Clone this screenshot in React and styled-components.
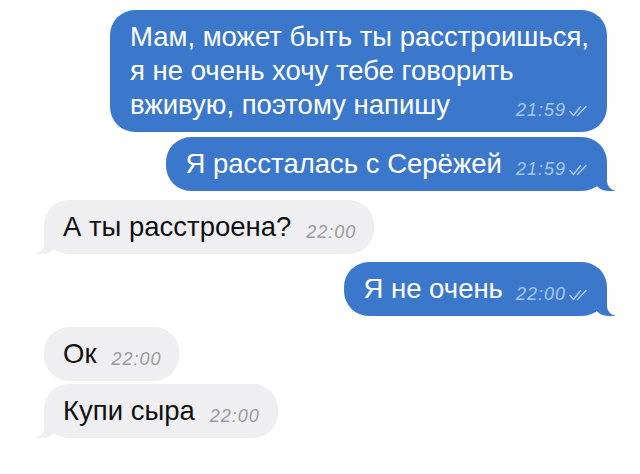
import React from "react";
import styled, { createGlobalStyle, css } from "styled-components";

const Global = createGlobalStyle`
  html, body { margin: 0; padding: 0; background: #fff; }
  body { font-family: "Liberation Sans", Arial, sans-serif; }
`;

const Chat = styled.div`
  width: 640px;
  height: 474px;
  box-sizing: border-box;
  padding: 10px 33px 0 44px;
  display: flex;
  flex-direction: column;
  background: #fff;
  overflow: hidden;
`;

const Row = styled.div`
  display: flex;
  justify-content: ${(p) => (p.$out ? "flex-end" : "flex-start")};
  margin-top: ${(p) => p.$gap || 0}px;
`;

const BLUE = "#3b78cc";
const GRAY = "#efeff2";

const Bubble = styled.div`
  position: relative;
  box-sizing: border-box;
  padding: 10px ${(p) => (p.$out ? 18 : 18)}px 10px ${(p) => (p.$out ? 20 : 19)}px;
  border-radius: 25px;
  background: ${(p) => (p.$out ? BLUE : GRAY)};
  color: ${(p) => (p.$out ? "#fff" : "#111")};
  font-size: 27.5px;
  line-height: 34px;

  ${(p) =>
    p.$tail &&
    p.$out &&
    css`
      &::before {
        content: "";
        position: absolute;
        right: -8px;
        bottom: 0;
        width: 22px;
        height: 26px;
        background: ${BLUE};
        border-bottom-left-radius: 16px 14px;
      }
      &::after {
        content: "";
        position: absolute;
        right: -26px;
        bottom: 0;
        width: 26px;
        height: 26px;
        background: #fff;
        border-bottom-left-radius: 10px;
      }
    `}

  ${(p) =>
    p.$tail &&
    !p.$out &&
    css`
      &::before {
        content: "";
        position: absolute;
        left: -8px;
        bottom: 0;
        width: 22px;
        height: 26px;
        background: ${GRAY};
        border-bottom-right-radius: 16px 14px;
      }
      &::after {
        content: "";
        position: absolute;
        left: -26px;
        bottom: 0;
        width: 26px;
        height: 26px;
        background: #fff;
        border-bottom-right-radius: 10px;
      }
    `}
`;

const Meta = styled.span`
  float: right;
  display: inline-flex;
  align-items: baseline;
  gap: 3px;
  margin: 12px 0 0 ${(p) => p.$gap || 15}px;
  font-size: 18px;
  font-style: italic;
  letter-spacing: 1px;
  line-height: 20px;
  color: ${(p) => (p.$out ? "#a9c6ee" : "#9a9aa0")};

  svg {
    align-self: center;
    margin-top: 2px;
  }
`;

const Check = () => (
  <svg width="20" height="12" viewBox="0 0 20 12" fill="none">
    <path d="M1 6.5 L4.5 10.5 L11.5 1.5" stroke="#b4cdf0" strokeWidth="1.3" strokeLinecap="round" strokeLinejoin="round" />
    <path d="M8.5 10.5 L17 1.5" stroke="#b4cdf0" strokeWidth="1.3" strokeLinecap="round" />
  </svg>
);

const Message = ({ out, tail, time, gap, metaGap, children }) => (
  <Row $out={out} $gap={gap}>
    <Bubble $out={out} $tail={tail}>
      {children}
      <Meta $out={out} $gap={metaGap}>
        {time}
        {out && <Check />}
      </Meta>
    </Bubble>
  </Row>
);

export default function App() {
  return (
    <>
      <Global />
      <Chat>
        <Message out time="21:59">
          Мам, может быть ты расстроишься,
          <br />я не очень хочу тебе говорить
          <br />
          вживую, поэтому напишу
        </Message>
        <Message out tail time="21:59" gap={5} metaGap={14}>
          Я рассталась с Серёжей
        </Message>
        <Message tail time="22:00" gap={9}>
          А ты расстроена?
        </Message>
        <Message out tail time="22:00" gap={8} metaGap={13}>
          Я не очень
        </Message>
        <Message time="22:00" gap={11}>
          Ок
        </Message>
        <Message tail time="22:00" gap={3}>
          Купи сыра
        </Message>
      </Chat>
    </>
  );
}
